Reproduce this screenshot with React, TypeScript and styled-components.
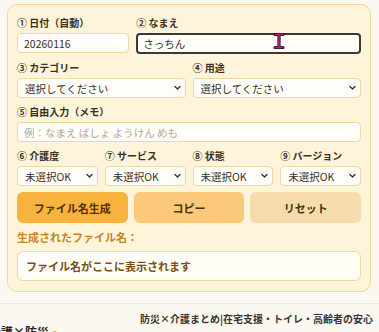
import React from 'react';
import styled, { createGlobalStyle } from 'styled-components';

const GlobalStyle = createGlobalStyle`
  html, body {
    margin: 0;
    padding: 0;
    background: #fbf8f1;
    overflow: hidden;
  }
  body {
    font-family: "Noto Sans CJK JP", "Noto Sans", sans-serif;
    color: #3d3020;
  }
  * {
    box-sizing: border-box;
  }
`;

type FocusProps = {
  $focused?: boolean;
};

type ButtonProps = {
  $tone: 'primary' | 'secondary' | 'muted';
};

const buttonColors = {
  primary: '#f8b33f',
  secondary: '#fcc97b',
  muted: '#f6dcab',
};

const Page = styled.div`
  position: relative;
  width: 379px;
  height: 332px;
  padding: 4px 8px 0 7px;
`;

const Panel = styled.div`
  width: 364px;
  background: #fdf4da;
  border: 1px solid #f3d89e;
  border-radius: 10px;
  padding: 11px 9px 10px 9px;
  display: flex;
  flex-direction: column;
  gap: 7px;
`;

const Row = styled.div<{ $cols: string }>`
  display: grid;
  grid-template-columns: ${props => props.$cols};
  column-gap: 7px;
`;

const Field = styled.div`
  display: flex;
  flex-direction: column;
  gap: 3px;
  min-width: 0;
`;

const Label = styled.div`
  font-size: 10px;
  line-height: 14px;
  font-weight: 700;
  color: #3d3020;
  white-space: nowrap;
`;

const TextInput = styled.input<FocusProps>`
  display: block;
  width: 100%;
  height: ${props => (props.$focused ? '21px' : '20px')};
  margin: 0;
  padding: 0 ${props => (props.$focused ? '5px' : '6px')};
  font-family: inherit;
  font-size: 10.5px;
  color: #3a3020;
  background: #fffdf8;
  border: ${props => (props.$focused ? '2px solid #3b3835' : '1px solid #f0d8a4')};
  border-radius: 4px;
  outline: none;

  &::placeholder {
    color: #b0a89a;
  }
`;

const SelectWrap = styled.div`
  position: relative;
  width: 100%;
  height: 20px;
`;

const Select = styled.select`
  display: block;
  appearance: none;
  width: 100%;
  height: 20px;
  margin: 0;
  padding: 0 14px 0 7px;
  font-family: inherit;
  font-size: 10.5px;
  color: #3a3020;
  background: #fffdf8;
  border: 1px solid #f0d8a4;
  border-radius: 4px;
  outline: none;
`;

const Chevron = styled.svg`
  position: absolute;
  right: 5px;
  top: 7px;
  width: 7px;
  height: 6px;
  pointer-events: none;
`;

const ButtonRow = styled.div`
  display: grid;
  grid-template-columns: 1fr 1fr 1fr;
  column-gap: 6px;
  margin-top: -1px;
`;

const ActionButton = styled.button<ButtonProps>`
  height: 31px;
  border: none;
  border-radius: 6px;
  background: ${props => buttonColors[props.$tone]};
  font-family: inherit;
  font-size: 11px;
  font-weight: 700;
  color: #4b3210;
  cursor: pointer;
`;

const ResultLabel = styled.div`
  font-size: 11px;
  line-height: 14px;
  font-weight: 700;
  color: #c4861f;
`;

const ResultBox = styled.div`
  height: 30px;
  display: flex;
  align-items: center;
  padding: 0 8px;
  background: #fffdf5;
  border: 1px solid #f0d6a0;
  border-radius: 6px;
  font-size: 11px;
  font-weight: 700;
  color: #7a4e12;
`;

const Divider = styled.div`
  margin: 11px -8px 0 -7px;
  border-top: 1px solid #ece8de;
`;

const Article = styled.div`
  display: flex;
  margin-left: -7px;
  padding-top: 8px;
`;

const Thumb = styled.div`
  flex-shrink: 0;
  width: 140px;
  height: 40px;
  overflow: hidden;
  position: relative;
`;

const ThumbText = styled.div`
  margin: 12px 0 0 -11px;
  font-size: 12px;
  line-height: 16px;
  font-weight: 700;
  color: #2f2a24;
  white-space: nowrap;
`;

const ThumbDot = styled.span`
  position: absolute;
  left: 52px;
  top: 19px;
  width: 5px;
  height: 5px;
  border-radius: 50%;
  background: #e9a23a;
`;

const ArticleTitle = styled.div`
  font-size: 10px;
  line-height: 14px;
  font-weight: 700;
  color: #3a3530;
  white-space: nowrap;
`;

const Cursor = styled.svg`
  position: absolute;
  left: 273px;
  top: 33px;
  width: 12px;
  height: 16px;
  pointer-events: none;
`;

const ChevronIcon = () => (
  <Chevron viewBox="0 0 7 6">
    <path d="M1 1.5 L3.5 4 L6 1.5" fill="none" stroke="#333" strokeWidth="1.4" strokeLinecap="round" strokeLinejoin="round" />
  </Chevron>
);

const Dropdown = ({ value }: { value: string }) => (
  <SelectWrap>
    <Select defaultValue={value}>
      <option>{value}</option>
    </Select>
    <ChevronIcon />
  </SelectWrap>
);

const App = () => {
  return (
    <>
      <GlobalStyle />
      <Page>
        <Panel>
          <Row $cols="1fr 2fr">
            <Field>
              <Label>① 日付（自動）</Label>
              <TextInput defaultValue="20260116" readOnly />
            </Field>
            <Field>
              <Label>② なまえ</Label>
              <TextInput $focused defaultValue="さっちん" />
            </Field>
          </Row>
          <Row $cols="1fr 1fr">
            <Field>
              <Label>③ カテゴリー</Label>
              <Dropdown value="選択してください" />
            </Field>
            <Field>
              <Label>④ 用途</Label>
              <Dropdown value="選択してください" />
            </Field>
          </Row>
          <Field>
            <Label>⑤ 自由入力（メモ）</Label>
            <TextInput placeholder="例：なまえ ばしょ ようけん めも" />
          </Field>
          <Row $cols="1fr 1fr 1fr 1fr">
            <Field>
              <Label>⑥ 介護度</Label>
              <Dropdown value="未選択OK" />
            </Field>
            <Field>
              <Label>⑦ サービス</Label>
              <Dropdown value="未選択OK" />
            </Field>
            <Field>
              <Label>⑧ 状態</Label>
              <Dropdown value="未選択OK" />
            </Field>
            <Field>
              <Label>⑨ バージョン</Label>
              <Dropdown value="未選択OK" />
            </Field>
          </Row>
          <ButtonRow>
            <ActionButton $tone="primary">ファイル名生成</ActionButton>
            <ActionButton $tone="secondary">コピー</ActionButton>
            <ActionButton $tone="muted">リセット</ActionButton>
          </ButtonRow>
          <ResultLabel>生成されたファイル名：</ResultLabel>
          <ResultBox>ファイル名がここに表示されます</ResultBox>
        </Panel>
        <Divider />
        <Article>
          <Thumb>
            <ThumbText>介護×防災</ThumbText>
            <ThumbDot />
          </Thumb>
          <ArticleTitle>防災×介護まとめ|在宅支援・トイレ・高齢者の安心</ArticleTitle>
        </Article>
        <Cursor viewBox="0 0 12 16">
          <path d="M2 1.5 H10 M2 14.5 H10 M6 1.5 V14.5" fill="none" stroke="#2a1020" strokeWidth="3.2" strokeLinecap="round" />
          <path d="M2 1.5 H10 M2 14.5 H10 M6 1.5 V14.5" fill="none" stroke="#b3226e" strokeWidth="1.6" strokeLinecap="round" />
        </Cursor>
      </Page>
    </>
  );
};

export default App;
